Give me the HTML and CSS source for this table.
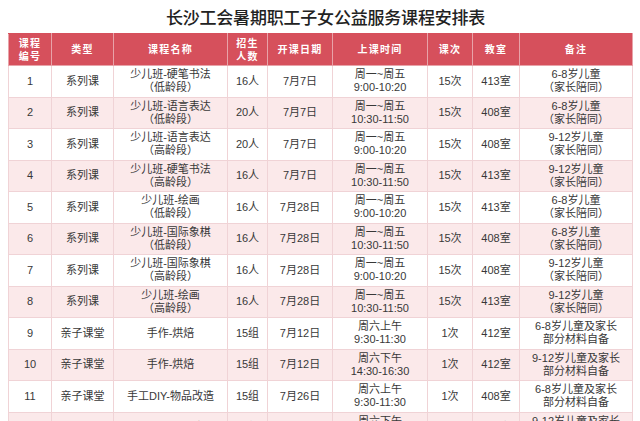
FILE: index.html
```html
<!DOCTYPE html>
<html lang="zh">
<head>
<meta charset="utf-8">
<title>长沙工会暑期职工子女公益服务课程安排表</title>
<link rel="stylesheet" href="styles.css">
</head>
<body>
<div class="page">
  <h1 class="title">长沙工会暑期职工子女公益服务课程安排表</h1>
  <table class="schedule">
    <colgroup>
      <col class="c1"><col class="c2"><col class="c3"><col class="c4"><col class="c5"><col class="c6"><col class="c7"><col class="c8"><col class="c9">
    </colgroup>
    <thead>
      <tr>
        <th>课程<br>编号</th><th>类型</th><th>课程名称</th><th>招生<br>人数</th><th>开课日期</th><th>上课时间</th><th>课次</th><th>教室</th><th>备注</th>
      </tr>
    </thead>
    <tbody>
      <tr><td>1</td><td>系列课</td><td>少儿班-硬笔书法<br>（低龄段）</td><td>16人</td><td>7月7日</td><td>周一~周五<br>9:00-10:20</td><td>15次</td><td>413室</td><td>6-8岁儿童<br>（家长陪同）</td></tr>
      <tr><td>2</td><td>系列课</td><td>少儿班-语言表达<br>（低龄段）</td><td>20人</td><td>7月7日</td><td>周一~周五<br>10:30-11:50</td><td>15次</td><td>408室</td><td>6-8岁儿童<br>（家长陪同）</td></tr>
      <tr><td>3</td><td>系列课</td><td>少儿班-语言表达<br>（高龄段）</td><td>20人</td><td>7月7日</td><td>周一~周五<br>9:00-10:20</td><td>15次</td><td>408室</td><td>9-12岁儿童<br>（家长陪同）</td></tr>
      <tr><td>4</td><td>系列课</td><td>少儿班-硬笔书法<br>（高龄段）</td><td>16人</td><td>7月7日</td><td>周一~周五<br>10:30-11:50</td><td>15次</td><td>413室</td><td>9-12岁儿童<br>（家长陪同）</td></tr>
      <tr><td>5</td><td>系列课</td><td>少儿班-绘画<br>（低龄段）</td><td>16人</td><td>7月28日</td><td>周一~周五<br>9:00-10:20</td><td>15次</td><td>413室</td><td>6-8岁儿童<br>（家长陪同）</td></tr>
      <tr><td>6</td><td>系列课</td><td>少儿班-国际象棋<br>（低龄段）</td><td>16人</td><td>7月28日</td><td>周一~周五<br>10:30-11:50</td><td>15次</td><td>408室</td><td>6-8岁儿童<br>（家长陪同）</td></tr>
      <tr><td>7</td><td>系列课</td><td>少儿班-国际象棋<br>（高龄段）</td><td>16人</td><td>7月28日</td><td>周一~周五<br>9:00-10:20</td><td>15次</td><td>408室</td><td>9-12岁儿童<br>（家长陪同）</td></tr>
      <tr><td>8</td><td>系列课</td><td>少儿班-绘画<br>（高龄段）</td><td>16人</td><td>7月28日</td><td>周一~周五<br>10:30-11:50</td><td>15次</td><td>413室</td><td>9-12岁儿童<br>（家长陪同）</td></tr>
      <tr><td>9</td><td>亲子课堂</td><td>手作-烘焙</td><td>15组</td><td>7月12日</td><td>周六上午<br>9:30-11:30</td><td>1次</td><td>412室</td><td>6-8岁儿童及家长<br>部分材料自备</td></tr>
      <tr><td>10</td><td>亲子课堂</td><td>手作-烘焙</td><td>15组</td><td>7月12日</td><td>周六下午<br>14:30-16:30</td><td>1次</td><td>412室</td><td>9-12岁儿童及家长<br>部分材料自备</td></tr>
      <tr><td>11</td><td>亲子课堂</td><td>手工DIY-物品改造</td><td>15组</td><td>7月26日</td><td>周六上午<br>9:30-11:30</td><td>1次</td><td>408室</td><td>6-8岁儿童及家长<br>部分材料自备</td></tr>
      <tr><td>12</td><td>亲子课堂</td><td>手工DIY-物品改造</td><td>15组</td><td>7月26日</td><td>周六下午<br>14:30-16:30</td><td>1次</td><td>408室</td><td>9-12岁儿童及家长<br>部分材料自备</td></tr>
    </tbody>
  </table>
</div>
</body>
</html>
```

FILE: styles.css
```css
html, body {
  margin: 0;
  padding: 0;
  background: #ffffff;
}
body {
  font-family: "Liberation Sans", "Noto Sans CJK SC", sans-serif;
  color: #383838;
  overflow: hidden;
  height: 421px;
}
.page {
  padding: 0 8px;
}
.title {
  margin: 0;
  padding: 1px 0 0 11px;
  height: 32px;
  line-height: 32px;
  font-family: "Noto Sans CJK SC", sans-serif;
  font-size: 17px;
  font-weight: 500;
  color: #222222;
  text-align: center;
  letter-spacing: -0.2px;
}
.schedule {
  width: 624px;
  table-layout: fixed;
  border-collapse: collapse;
  font-size: 11px;
}
.c1 { width: 43px; }
.c2 { width: 62px; }
.c3 { width: 114px; }
.c4 { width: 40px; }
.c5 { width: 65px; }
.c6 { width: 95px; }
.c7 { width: 45px; }
.c8 { width: 47px; }
.c9 { width: 113px; }
.schedule thead tr {
  height: 32px;
}
.schedule tbody tr {
  height: 31.5px;
}
.schedule th {
  background: #d6505c;
  color: #ffffff;
  font-weight: 700;
  padding: 0;
  line-height: 13px;
  font-size: 10px;
  letter-spacing: 1.2px;
  border: 1px solid #e8a3a9;
  border-top-color: #d6505c;
  text-align: center;
  vertical-align: middle;
}
.schedule td {
  padding: 0;
  line-height: 13px;
  text-align: center;
  vertical-align: middle;
  border: 1px solid #f0d3d6;
  white-space: nowrap;
}
.schedule tbody tr:nth-child(even) td {
  background: #fbe9ea;
}
.schedule tbody tr:nth-child(odd) td {
  background: #ffffff;
}
```
